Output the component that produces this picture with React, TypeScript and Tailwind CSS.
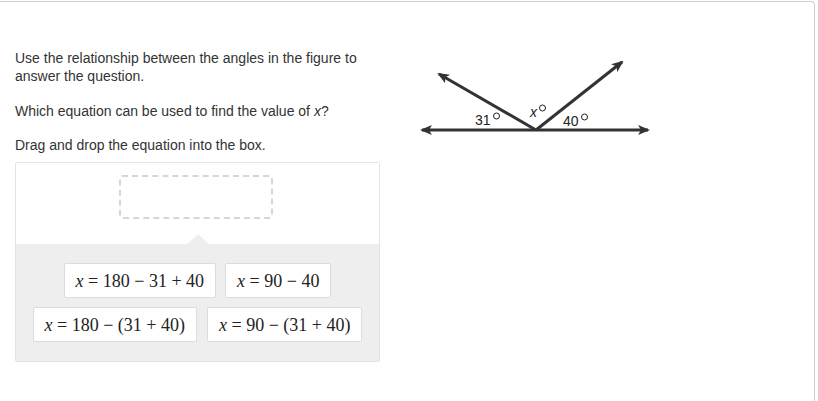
import React from "react";

const sans = { fontFamily: '"Liberation Sans", Arial, sans-serif' };
const serif = { fontFamily: '"Liberation Serif", "Times New Roman", serif' };

function Figure() {
  return (
    <svg width="250" height="90" viewBox="0 0 250 90" className="shrink-0">
      <defs>
        <marker id="tip" viewBox="0 0 12 10" refX="10" refY="5" markerWidth="12" markerHeight="10" markerUnits="userSpaceOnUse" orient="auto">
          <path d="M0 0 L12 5 L0 10 L3 5 Z" fill="#333" />
        </marker>
      </defs>
      {/* vertex at (131, 73) in this box; page origin is (405, 55) */}
      <line x1="131" y1="73" x2="17" y2="73" stroke="#333" strokeWidth="3" markerEnd="url(#tip)" />
      <line x1="131" y1="73" x2="243" y2="73" stroke="#333" strokeWidth="3" markerEnd="url(#tip)" />
      <line x1="131" y1="73" x2="34" y2="17" stroke="#333" strokeWidth="3" markerEnd="url(#tip)" />
      <line x1="131" y1="73" x2="217" y2="5" stroke="#333" strokeWidth="3" markerEnd="url(#tip)" />
      <g fill="#222" style={sans} fontSize="14">
        <text x="70" y="68">31</text>
        <circle cx="91.5" cy="59" r="3" fill="none" stroke="#222" strokeWidth="1" />
        <text x="125" y="60" fontStyle="italic">x</text>
        <circle cx="137.5" cy="51" r="3" fill="none" stroke="#222" strokeWidth="1" />
        <text x="158" y="69">40</text>
        <circle cx="179.5" cy="60" r="3" fill="none" stroke="#222" strokeWidth="1" />
      </g>
    </svg>
  );
}

function Chip({ children }: { children: React.ReactNode }) {
  return (
    <div
      className="h-[35px] px-[11px] flex items-center bg-white border border-[#dcdcdc] rounded-[2px] text-[18px] text-[#222] whitespace-pre"
      style={serif}
    >
      {children}
    </div>
  );
}

const X = () => <i>x</i>;

export default function App() {
  return (
    <div className="w-[818px] h-[401px] bg-white overflow-hidden pt-px">
      <div className="w-[815px] h-[400px] border-t border-r border-[#d0d0d0] rounded-tr-[4px]">
        <div className="flex pt-[47px] pl-[15px]">
          <div className="w-[365px] text-[14px] leading-[18px] text-[#333]" style={sans}>
            <p className="mb-[17px]">
              Use the relationship between the angles in the figure to answer the question.
            </p>
            <p className="mb-[17px]">
              Which equation can be used to find the value of <i>x</i>?
            </p>
            <p className="mb-[8px] -mt-[1px]">Drag and drop the equation into the box.</p>

            <div className="border border-[#e3e3e3] rounded-[2px]">
              <div className="relative h-[81px] bg-white flex justify-center pt-[12px]">
                <div className="w-[154px] h-[44px] border-2 border-dashed border-[#d6d6d6] rounded-[3px] -ml-[3px]" />
                <div className="absolute left-[171px] bottom-0 w-0 h-0 border-l-[11px] border-r-[11px] border-b-[10px] border-l-transparent border-r-transparent border-b-[#eeeeee]" />
              </div>
              <div className="bg-[#eeeeee] h-[117px] pt-[19px] flex flex-col items-center gap-[9px]">
                <div className="flex gap-[9px]">
                  <Chip>
                    <X /> = 180 − 31 + 40
                  </Chip>
                  <Chip>
                    <X /> = 90 − 40
                  </Chip>
                </div>
                <div className="flex gap-[10px]">
                  <Chip>
                    <X /> = 180 − (31 + 40)
                  </Chip>
                  <Chip>
                    <X /> = 90 − (31 + 40)
                  </Chip>
                </div>
              </div>
            </div>
          </div>
          <div className="ml-[25px] mt-[8px]">
            <Figure />
          </div>
        </div>
      </div>
    </div>
  );
}
